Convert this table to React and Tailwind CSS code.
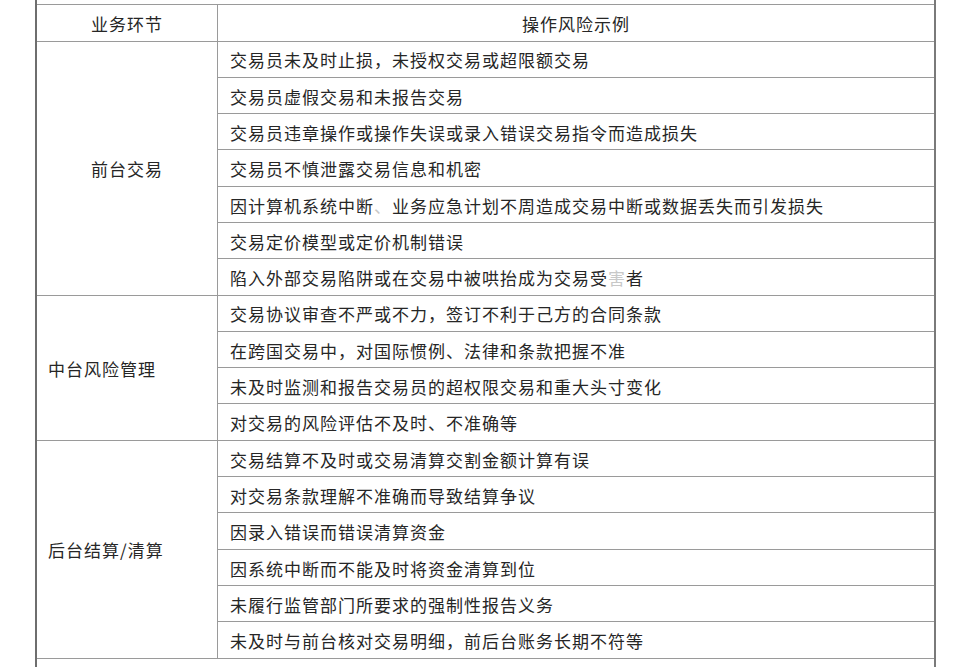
import React from "react";

const font = { fontFamily: '"Noto Sans CJK SC", "Noto Sans", sans-serif' };

const groups = [
  {
    name: "前台交易",
    align: "center",
    rows: [
      "交易员未及时止损，未授权交易或超限额交易",
      "交易员虚假交易和未报告交易",
      "交易员违章操作或操作失误或录入错误交易指令而造成损失",
      "交易员不慎泄露交易信息和机密",
      ["因计算机系统中断", "、", "业务应急计划不周造成交易中断或数据丢失而引发损失"],
      "交易定价模型或定价机制错误",
      ["陷入外部交易陷阱或在交易中被哄抬成为交易受", "害", "者"],
    ],
  },
  {
    name: "中台风险管理",
    align: "left",
    rows: [
      "交易协议审查不严或不力，签订不利于己方的合同条款",
      "在跨国交易中，对国际惯例、法律和条款把握不准",
      "未及时监测和报告交易员的超权限交易和重大头寸变化",
      "对交易的风险评估不及时、不准确等",
    ],
  },
  {
    name: "后台结算/清算",
    align: "left",
    rows: [
      "交易结算不及时或交易清算交割金额计算有误",
      "对交易条款理解不准确而导致结算争议",
      "因录入错误而错误清算资金",
      "因系统中断而不能及时将资金清算到位",
      "未履行监管部门所要求的强制性报告义务",
      "未及时与前台核对交易明细，前后台账务长期不符等",
    ],
  },
];

function RowText({ r }) {
  if (Array.isArray(r)) {
    return (
      <>
        {r[0]}
        <span className="text-[#c8c8c8]">{r[1]}</span>
        {r[2]}
      </>
    );
  }
  return r;
}

export default function App() {
  return (
    <div
      className="w-[975px] h-[667px] bg-white overflow-hidden text-[17px] tracking-[1px] text-[#262626]"
      style={font}
    >
      <div className="ml-[35px] w-[901px] h-[667px] border-l-2 border-r-2 border-l-[#6e6e6e] border-r-[#7a7a7a] flex flex-col">
        <div className="h-[4px]" />
        <div className="border-t border-[#9a9a9a]">
          <div className="flex h-[36.5px] border-b border-[#9a9a9a]">
            <div className="w-[181px] border-r border-[#9a9a9a] flex items-center justify-center pt-[2px]">
              业务环节
            </div>
            <div className="flex-1 flex items-center justify-center pt-[2px]">操作风险示例</div>
          </div>
          {groups.map((g) => (
            <div key={g.name} className="flex">
              <div
                className={
                  g.align === "center"
                    ? "w-[181px] border-r border-[#9a9a9a] border-b flex items-center justify-center pt-[2px]"
                    : "w-[181px] border-r border-[#9a9a9a] border-b flex items-center justify-start pl-[11px] pt-[2px]"
                }
              >
                {g.name}
              </div>
              <div className="flex-1 flex flex-col">
                {g.rows.map((r, i) => (
                  <div
                    key={i}
                    className="h-[36.3px] border-b border-[#9a9a9a] flex items-center pl-[12px] pt-[2px] whitespace-nowrap"
                  >
                    <RowText r={r} />
                  </div>
                ))}
              </div>
            </div>
          ))}
        </div>
      </div>
    </div>
  );
}
